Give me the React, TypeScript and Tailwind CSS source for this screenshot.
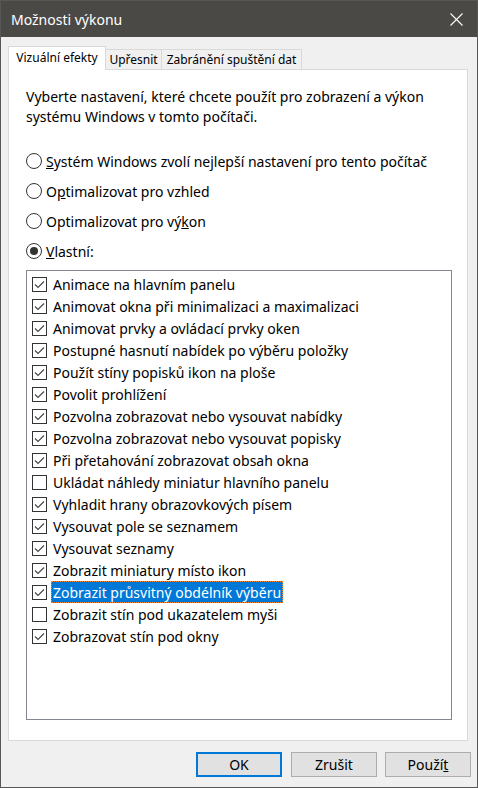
import React from "react";

const items: { label: string; checked: boolean; selected?: boolean }[] = [
  { label: "Animace na hlavním panelu", checked: true },
  { label: "Animovat okna při minimalizaci a maximalizaci", checked: true },
  { label: "Animovat prvky a ovládací prvky oken", checked: true },
  { label: "Postupné hasnutí nabídek po výběru položky", checked: true },
  { label: "Použít stíny popisků ikon na ploše", checked: true },
  { label: "Povolit prohlížení", checked: true },
  { label: "Pozvolna zobrazovat nebo vysouvat nabídky", checked: true },
  { label: "Pozvolna zobrazovat nebo vysouvat popisky", checked: true },
  { label: "Při přetahování zobrazovat obsah okna", checked: true },
  { label: "Ukládat náhledy miniatur hlavního panelu", checked: false },
  { label: "Vyhladit hrany obrazovkových písem", checked: true },
  { label: "Vysouvat pole se seznamem", checked: true },
  { label: "Vysouvat seznamy", checked: true },
  { label: "Zobrazit miniatury místo ikon", checked: true },
  { label: "Zobrazit průsvitný obdélník výběru", checked: true, selected: true },
  { label: "Zobrazit stín pod ukazatelem myši", checked: false },
  { label: "Zobrazovat stín pod okny", checked: true },
];

function Check({ checked }: { checked: boolean }) {
  return (
    <div className="w-[15px] h-[15px] border border-[#333333] bg-white flex items-center justify-center shrink-0">
      {checked && (
        <svg width="13" height="13" viewBox="0 0 13 13">
          <polyline points="2,6.5 5,9.5 11,3.5" fill="none" stroke="#444" strokeWidth="1.1" />
        </svg>
      )}
    </div>
  );
}

function Radio({ checked }: { checked: boolean }) {
  return (
    <div className="w-[16px] h-[16px] rounded-full border border-[#333333] bg-white flex items-center justify-center shrink-0">
      {checked && <div className="w-[8px] h-[8px] rounded-full bg-[#333333]" />}
    </div>
  );
}

export default function App() {
  return (
    <div
      className="w-[478px] h-[788px] bg-[#f0f0f0] border border-[#575757] flex flex-col text-black"
      style={{ fontFamily: '"Noto Sans", "Liberation Sans", sans-serif' }}
    >
      {/* Title bar */}
      <div className="h-[36px] bg-[#4b4946] flex items-center justify-between pl-[10px] pr-[14px] shrink-0">
        <span className="text-[14px] text-white">Možnosti výkonu</span>
        <svg width="13" height="13" viewBox="0 0 13 13">
          <line x1="0.5" y1="0.5" x2="12.5" y2="12.5" stroke="#ffffff" strokeWidth="1.1" />
          <line x1="12.5" y1="0.5" x2="0.5" y2="12.5" stroke="#ffffff" strokeWidth="1.1" />
        </svg>
      </div>

      {/* Tabs */}
      <div className="pl-[7px] pt-[9px] flex flex-col">
        <div className="flex items-end h-[23px] text-[12px] whitespace-nowrap">
          <div className="w-[98px] h-[24px] bg-white border border-[#d9d9d9] border-b-0 relative z-10 -mb-px flex items-center justify-center pb-[2px]">
            Vizuální efekty
          </div>
          <div className="w-[56px] h-[20px] border-t border-r border-[#d9d9d9] flex items-center justify-center">
            Upřesnit
          </div>
          <div className="w-[140px] h-[20px] border-t border-r border-[#d9d9d9] flex items-center justify-center">
            Zabránění spuštění dat
          </div>
        </div>

        {/* Panel */}
        <div className="w-[460px] h-[672px] bg-white border border-[#d9d9d9] flex flex-col pl-[17px] pt-[17px] text-[14px]">
          <p className="leading-[20px] w-[420px]">
            Vyberte nastavení, které chcete použít pro zobrazení a výkon systému Windows v tomto počítači.
          </p>

          <div className="mt-[19px] flex flex-col">
            <div className="h-[30px] flex items-center gap-[4px]">
              <Radio checked={false} />
              <span>
                <u>S</u>ystém Windows zvolí nejlepší nastavení pro tento počítač
              </span>
            </div>
            <div className="h-[30px] flex items-center gap-[4px]">
              <Radio checked={false} />
              <span>
                O<u>p</u>timalizovat pro vzhled
              </span>
            </div>
            <div className="h-[30px] flex items-center gap-[4px]">
              <Radio checked={false} />
              <span>
                Optimalizovat pro vý<u>k</u>on
              </span>
            </div>
            <div className="h-[30px] flex items-center gap-[4px]">
              <Radio checked={true} />
              <span>
                <u>V</u>lastní:
              </span>
            </div>
          </div>

          {/* List */}
          <div className="mt-[4px] w-[426px] h-[450px] border border-[#828790] bg-white pt-[2px] pl-[5px] flex flex-col">
            {items.map((it) => (
              <div key={it.label} className="h-[22px] flex items-center">
                <Check checked={it.checked} />
                <span
                  className={
                    it.selected
                      ? "ml-[4px] h-[22px] flex items-center px-[1px] bg-[#0078d7] text-white border border-dotted border-[#ff8728]"
                      : "ml-[4px] h-[22px] flex items-center px-[2px]"
                  }
                >
                  {it.label}
                </span>
              </div>
            ))}
          </div>
        </div>
      </div>

      {/* Buttons */}
      <div className="flex justify-end pr-[6px] mt-[11px] gap-[9px] text-[14px]">
        <button className="w-[86px] h-[25px] bg-[#e1e1e1] border-2 border-[#0078d7] flex items-center justify-center">
          OK
        </button>
        <button className="w-[86px] h-[25px] bg-[#e1e1e1] border border-[#adadad] flex items-center justify-center">
          Zrušit
        </button>
        <button className="w-[86px] h-[25px] bg-[#e1e1e1] border border-[#adadad] flex items-center justify-center ml-[-1px]">
          Použí<u>t</u>
        </button>
      </div>
    </div>
  );
}
